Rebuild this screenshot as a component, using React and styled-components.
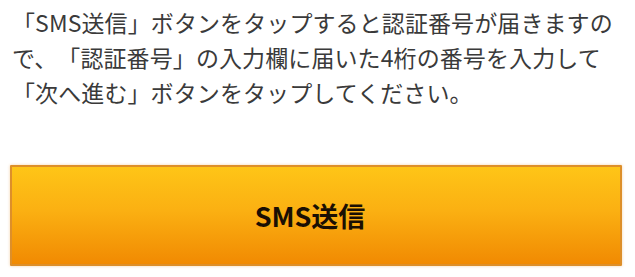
import React from 'react'
import styled, { createGlobalStyle } from 'styled-components'

const GlobalStyle = createGlobalStyle`
    html, body {
        margin: 0;
        padding: 0;
        background-color: #ffffff;
    }
    body {
        font-family: "Noto Sans CJK JP", "Noto Sans", sans-serif;
    }
`
const Container = styled.div`
    width: 635px;
    height: 277px;
    padding: 5px 0 0 12px;
    box-sizing: border-box;
    overflow: hidden;
`
const Note = styled.p`
    margin: 0;
    font-size: 23px;
    line-height: 35px;
    color: #3a3a3a;
    white-space: nowrap;
    letter-spacing: 0.1px;
    text-spacing-trim: space-all;
`
const SendButton = styled.button`
    display: flex;
    align-items: center;
    justify-content: center;
    width: 612px;
    height: 101px;
    margin: 55px 0 0 -2px;
    padding: 0 12px 0 0;
    box-sizing: border-box;
    border: 2px solid #dd8f2a;
    border-radius: 1px;
    background: linear-gradient(to bottom, #fec517 0%, #fbb012 45%, #f18a02 100%);
    box-shadow: 0 0 3px rgba(230, 150, 60, 0.45);
    font-family: "Noto Sans CJK JP", "Noto Sans", sans-serif;
    font-size: 27px;
    font-weight: 700;
    color: #1a0f03;
    cursor: pointer;
`

const App = () => {
    return (
        <>
            <GlobalStyle />
            <Container>
                <Note>
                    「SMS送信」ボタンをタップすると認証番号が届きますの<br />
                    で、「認証番号」の入力欄に届いた4桁の番号を入力して<br />
                    「次へ進む」ボタンをタップしてください。
                </Note>
                <SendButton>SMS送信</SendButton>
            </Container>
        </>
    )
}

export default App
